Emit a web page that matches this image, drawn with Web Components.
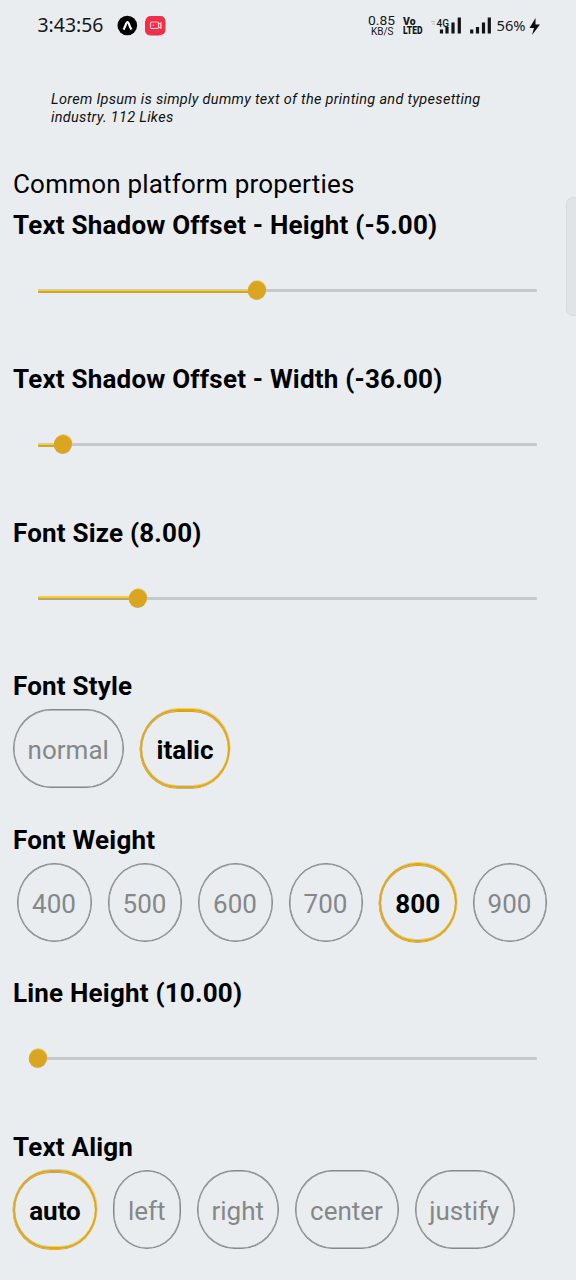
<!DOCTYPE html>
<html lang="en">
<head>
<meta charset="utf-8">
<title>Text properties</title>
<style>
html,body{margin:0;height:100%}
body{background:#e9edf0;overflow:hidden;font-family:Roboto,"Liberation Sans",sans-serif;color:#000}
</style>
</head>
<body>
<text-playground></text-playground>
<script>
class BaseElement extends HTMLElement {
  constructor() {
    super();
    this.attachShadow({ mode: 'open' });
  }
  connectedCallback() { this.shadowRoot.innerHTML = this.render(); }
}

class StatusBar extends BaseElement {
  render() {
    return `<style>
      :host{display:flex;justify-content:space-between;height:50px;padding:0 34px 0 37px;box-sizing:border-box}
      .group{display:flex}
      svg{display:block;flex:none}
      text{font-family:"Noto Sans",sans-serif;fill:#161819}
      .roboto{font-family:Roboto,sans-serif}
    </style>
    <div class="group">
      <svg width="134" height="50" viewBox="37 0 134 50">
        <text x="37.500" y="32.300" font-size="19.500" textLength="66" lengthAdjust="spacingAndGlyphs">3:43:56</text>
        <circle cx="127.300" cy="25.500" r="9.800" fill="#000"/>
        <path d="M123.500 29.500C125.300 27 126 22.200 127.500 22.200S129.500 27 131.500 29.500" fill="none" stroke="#fff" stroke-width="2.200"/>
        <rect x="145.500" y="16" width="20" height="19" rx="5" fill="#f22e49"/>
        <path d="M145.500 21v9q0 5 5 5h9" fill="none" stroke="#8d5a5e" stroke-width="1"/>
        <rect x="150.500" y="22" width="8" height="6.500" rx="1.200" fill="none" stroke="#ffc6ca" stroke-width="1.200"/>
        <path d="M158.500 24l2.400-1v5l-2.400-1" fill="none" stroke="#ffe0d8" stroke-width="1.200"/>
        <circle cx="153.300" cy="25.300" r=".7" fill="#ffc6ca"/>
      </svg>
    </div>
    <div class="group">
      <svg width="176" height="50" viewBox="366 0 176 50">
        <text class="roboto" x="368" y="25.300" font-size="12.500" textLength="27" lengthAdjust="spacingAndGlyphs">0.85</text>
        <text class="roboto" x="371" y="34.800" font-size="10.500" textLength="22.500" lengthAdjust="spacingAndGlyphs">KB/S</text>
        <text class="roboto" x="403" y="25.300" font-size="11" font-weight="900" textLength="12.500" lengthAdjust="spacingAndGlyphs">Vo</text>
        <text class="roboto" x="403" y="33.800" font-size="10.500" font-weight="900" textLength="19.500" lengthAdjust="spacingAndGlyphs">LTED</text>
        <path d="M431 21.500h4M432 24h3" stroke="#b9bdbf" stroke-width="1"/>
        <path d="M441.500 33.500v-4M447 33.500v-6.500M453 33.500V22.500M459.300 33.500V17.500M471.700 33.500v-4M477.500 33.500v-6.500M483.500 33.500V22.500M489.300 33.500V17.500" stroke="#111314" stroke-width="3.200"/>
        <text class="roboto" x="436.500" y="26.500" font-size="11.500" font-weight="500" textLength="12.500" lengthAdjust="spacingAndGlyphs">4G</text>
        <text x="496.500" y="30.800" font-size="14" textLength="29" lengthAdjust="spacingAndGlyphs">56%</text>
        <path d="M535.500 18L529.500 28h4.500L532 35l8-10.500h-4.500z" fill="#0b0c0d"/>
      </svg>
    </div>`;
  }
}
customElements.define('status-bar', StatusBar);

class PreviewText extends BaseElement {
  render() {
    return `<style>
      :host{display:block;padding:41px 51px 0;font-size:14.500px;line-height:18px;letter-spacing:.3px;font-style:italic;height:78.400px;width:450px;color:#111}
    </style><slot></slot>`;
  }
}
customElements.define('preview-text', PreviewText);

class GroupTitle extends BaseElement {
  render() {
    return `<style>
      :host{display:block;padding-left:13px;font-size:26px;line-height:30px;height:41px;white-space:nowrap;letter-spacing:.2px}
    </style><slot></slot>`;
  }
}
customElements.define('group-title', GroupTitle);

class PropertyField extends BaseElement {
  render() {
    return `<style>
      :host{display:flex;flex-direction:column;height:153.600px;padding-left:13px}
      h2{margin:0;font-size:26px;line-height:31px;font-weight:700;white-space:nowrap;letter-spacing:.2px}
      .row{display:flex;gap:16px;padding-top:7.100px}
    </style><h2>${this.getAttribute('label')}</h2><div class="row"><slot></slot></div>`;
  }
}
customElements.define('property-field', PropertyField);

class ValueSlider extends BaseElement {
  render() {
    const x = Number(this.getAttribute('value')) * 499;
    return `<style>
      :host{display:flex;align-items:center;width:499px;height:85px;margin-left:25px}
      .track{height:3px;flex:1;background:#c5c9cc;border-radius:1px}
      .fill{height:4px;width:${x}px;background:linear-gradient(#fbd02a 0 45%,#b4a47b 60%);border-radius:1px;flex:none}
      .thumb{width:18px;height:18px;border-radius:50%;background:#daa520;margin:0 -9px;flex:none;position:relative;top:-.5px;
        box-shadow:.5px -1px 0 #fed747,-.3px 1px 0 #b5a88c;z-index:1}
    </style><div class="fill"></div><div class="thumb"></div><div class="track"></div>`;
  }
}
customElements.define('value-slider', ValueSlider);

class OptionChip extends BaseElement {
  render() {
    return `<style>
      :host{display:flex;box-sizing:border-box;align-items:center;justify-content:center;height:79px;
        width:${this.getAttribute('width')}px;border:1px solid #858788;border-radius:37.500px/39.500px;
        box-shadow:inset 0 0 0 .5px #858788;
        font-size:26px;color:#858788;padding-top:3px;padding-right:.5px;line-height:30px}
      :host([selected]){border:2px solid #e0a71c;color:#000;font-weight:700;padding-right:0;
        box-shadow:.6px -.9px 0 #fdd33e,-.4px .8px 0 #aaa08b,inset 0 1px 0 #aaa08b,inset 0 -1px 0 #fdd33e}
    </style><slot></slot>`;
  }
}
customElements.define('option-chip', OptionChip);

class EdgeHandle extends BaseElement {
  render() {
    return `<style>
      :host{position:absolute;right:0;top:197px;width:10px;height:119px;box-sizing:border-box;
        background:#e0e4e7;border:1px solid #d8dcde;border-right:0;border-radius:7px 0 0 7px}
    </style>`;
  }
}
customElements.define('edge-handle', EdgeHandle);

class TextPlayground extends BaseElement {
  render() {
    return `<style>:host{display:block;width:576px;height:1280px;position:relative;overflow:hidden}
      .weights{margin-left:4px}</style>
    <status-bar></status-bar>
    <preview-text>Lorem Ipsum is simply dummy text of the printing and typesetting industry. 112 Likes</preview-text>
    <group-title>Common platform properties</group-title>
    <property-field label="Text Shadow Offset - Height (-5.00)"><value-slider value="0.439"></value-slider></property-field>
    <property-field label="Text Shadow Offset - Width (-36.00)"><value-slider value="0.051"></value-slider></property-field>
    <property-field label="Font Size (8.00)"><value-slider value="0.201"></value-slider></property-field>
    <property-field label="Font Style">
      <option-chip width="111">normal</option-chip><option-chip width="90" selected>italic</option-chip>
    </property-field>
    <property-field label="Font Weight">
      <option-chip class="weights" width="74.500">400</option-chip><option-chip width="74.500">500</option-chip><option-chip width="74.500">600</option-chip><option-chip width="74.500">700</option-chip><option-chip width="77.500" selected>800</option-chip><option-chip width="74.500">900</option-chip>
    </property-field>
    <property-field label="Line Height (10.00)"><value-slider value="0"></value-slider></property-field>
    <property-field label="Text Align">
      <option-chip width="84" selected>auto</option-chip><option-chip width="68">left</option-chip><option-chip width="82">right</option-chip><option-chip width="103.500">center</option-chip><option-chip width="100">justify</option-chip>
    </property-field>
    <edge-handle></edge-handle>`;
  }
}
customElements.define('text-playground', TextPlayground);
</script>
</body>
</html>
